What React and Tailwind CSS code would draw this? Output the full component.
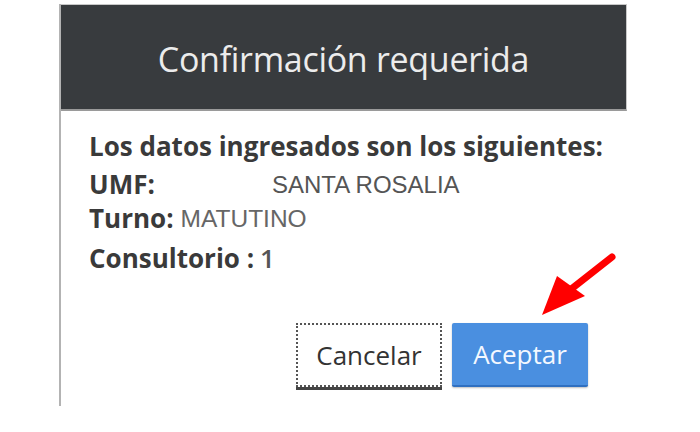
import React from "react";

export default function App() {
  return (
    <div className="relative w-[700px] h-[432px] bg-white overflow-hidden" style={{ fontFamily: '"Open Sans", "Liberation Sans", sans-serif' }}>
      <div className="pl-[59px] pt-[4px]">
        <div className="w-[568px] h-[402px] border-l-2 border-[#b3b3b3] flex flex-col">
          <div className="h-[107px] bg-[#383b3e] border-t border-[#c8c8c8] border-b-2 border-b-[#9a9a9a] border-r border-r-[#c8c8c8] flex items-center justify-center">
            <span className="text-[34px] text-[#ececec] leading-none pt-[4px] tracking-[-0.3px]">Confirmación requerida</span>
          </div>
          <div className="flex-1 pl-[28px] pt-[18px] flex flex-col">
            <div className="text-[26px] font-bold text-[#3a3a3a] leading-[35px]">Los datos ingresados son los siguientes:</div>
            <div className="mt-[3px] text-[26px] leading-[35px] flex">
              <span className="font-bold text-[#3a3a3a] w-[183px]">UMF:</span>
              <span className="text-[#555] text-[24px]" style={{ fontFamily: '"Liberation Sans", sans-serif' }}>SANTA ROSALIA</span>
            </div>
            <div className="text-[26px] leading-[33px] flex">
              <span className="font-bold text-[#3a3a3a]">Turno:</span>
              <span className="ml-[7px] text-[#666] text-[24.5px]" style={{ fontFamily: '"Liberation Sans", sans-serif' }}>MATUTINO</span>
            </div>
            <div className="text-[26px] leading-[47px] flex">
              <span className="font-bold text-[#3a3a3a]">Consultorio :</span>
              <span className="ml-[6px] text-[#555] font-semibold">1</span>
            </div>
            <div className="flex mt-[41px] pl-[207px] gap-[10px] items-start">
              <button className="w-[146px] h-[64px] bg-white border-2 border-dotted border-[#555] shadow-[0_3px_0_#444] text-[26px] text-[#333]">Cancelar</button>
              <button className="w-[136px] h-[64px] bg-[#4a8fe0] border-b-2 border-[#2f6fc0] rounded-[2px] text-[26px] text-[#f4f8ff] shadow-[0_1px_2px_rgba(0,0,0,0.25)]">Aceptar</button>
            </div>
          </div>
        </div>
      </div>
      <svg className="absolute left-0 top-0" width="700" height="432" viewBox="0 0 700 432">
        <line x1="612" y1="257" x2="570" y2="290" stroke="#f00" strokeWidth="7" strokeLinecap="round" />
        <polygon points="542,315 557,276 585,296" fill="#f00" />
      </svg>
    </div>
  );
}
